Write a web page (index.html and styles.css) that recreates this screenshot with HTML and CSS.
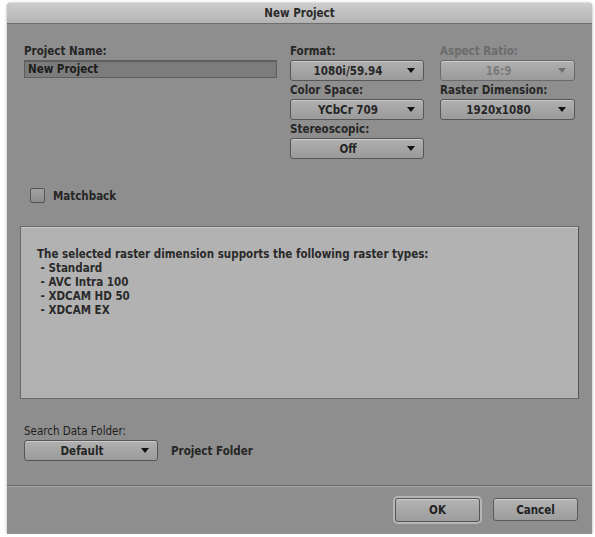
FILE: index.html
```html
<!DOCTYPE html>
<html lang="en">
<head>
    <meta charset="UTF-8">
    <meta name="viewport" content="width=device-width, initial-scale=1.0">
    <title>New Project</title>
    <link rel="stylesheet" href="styles.css">
</head>
<body>
    <div class="window">
        <div class="titlebar">New Project</div>
        <div class="content">
            <div class="top">
                <div class="col col-name">
                    <div class="field">
                        <label for="projectName">Project Name:</label>
                        <input type="text" id="projectName" class="name-input" value="New Project">
                    </div>
                </div>
                <div class="col col-mid">
                    <div class="field">
                        <label>Format:</label>
                        <div class="popup">1080i/59.94<span class="arrow"></span></div>
                    </div>
                    <div class="field">
                        <label>Color Space:</label>
                        <div class="popup">YCbCr 709<span class="arrow"></span></div>
                    </div>
                    <div class="field">
                        <label>Stereoscopic:</label>
                        <div class="popup">Off<span class="arrow"></span></div>
                    </div>
                </div>
                <div class="col col-right">
                    <div class="field disabled">
                        <label>Aspect Ratio:</label>
                        <div class="popup">16:9<span class="arrow"></span></div>
                    </div>
                    <div class="field">
                        <label>Raster Dimension:</label>
                        <div class="popup">1920x1080<span class="arrow"></span></div>
                    </div>
                </div>
            </div>

            <div class="check-row">
                <span class="checkbox"></span>
                <span class="check-label">Matchback</span>
            </div>

            <div class="info">
                <p>The selected raster dimension supports the following raster types:</p>
                <p>&nbsp;- Standard</p>
                <p>&nbsp;- AVC Intra 100</p>
                <p>&nbsp;- XDCAM HD 50</p>
                <p>&nbsp;- XDCAM EX</p>
            </div>

            <div class="search">
                <label>Search Data Folder:</label>
                <div class="search-row">
                    <div class="popup">Default<span class="arrow"></span></div>
                    <span class="folder">Project Folder</span>
                </div>
            </div>
        </div>
        <div class="footer">
            <button class="btn btn-default">OK</button>
            <button class="btn">Cancel</button>
        </div>
    </div>
</body>
</html>
```

FILE: styles.css
```css
body {
    margin: 0;
    padding: 0;
    background: #ffffff;
    font-family: "DejaVu Sans Condensed", "DejaVu Sans", sans-serif;
    font-size: 11.5px;
    color: #1e1e1e;
}
.window {
    margin: 3px 3px 0 7px;
    width: 585px;
    height: 531px;
    background: #8e8e8e;
    border-radius: 4px 4px 0 0;
    box-shadow: 0 0 3px rgba(0, 0, 0, 0.35);
    display: flex;
    flex-direction: column;
}
.titlebar {
    height: 20px;
    line-height: 21px;
    text-align: center;
    font-weight: bold;
    background: linear-gradient(#cdcdcd, #b3b3b3);
    border-bottom: 1px solid #6e6e6e;
    border-radius: 4px 4px 0 0;
    color: #2a2a2a;
}
.content {
    padding: 21px 0 0 13px;
    flex: 1;
}
.top {
    display: flex;
}
.col-name {
    width: 253px;
    margin-left: 4px;
}
.col-mid {
    width: 134px;
    margin-left: 13px;
}
.col-right {
    width: 135px;
    margin-left: 16px;
}
.field {
    margin-bottom: 3px;
}
.field label,
.search label {
    display: block;
    height: 13px;
    line-height: 13px;
    margin-bottom: 2px;
    font-weight: bold;
    color: #262626;
}
.field.disabled label {
    color: #6c6c6c;
}
.name-input {
    box-sizing: border-box;
    width: 253px;
    height: 18px;
    margin: 0;
    padding: 0 3px;
    border: 1px solid #5e5e5e;
    background: #7c7c7c;
    box-shadow: inset 0 1px 1px rgba(0, 0, 0, 0.25);
    font-family: inherit;
    font-size: 11.5px;
    font-weight: bold;
    color: #1c1c1c;
}
.popup {
    position: relative;
    box-sizing: border-box;
    height: 21px;
    line-height: 20px;
    border: 1px solid #565656;
    border-radius: 3px;
    background: linear-gradient(#b0b0b0, #9a9a9a);
    box-shadow: inset 0 1px 0 rgba(255, 255, 255, 0.35);
    text-align: center;
    padding-right: 18px;
    font-weight: bold;
    color: #262626;
}
.arrow {
    position: absolute;
    right: 8px;
    top: 7px;
    width: 0;
    height: 0;
    border-left: 4px solid transparent;
    border-right: 4px solid transparent;
    border-top: 5px solid #111111;
}
.disabled .popup {
    color: #7a7a7a;
    border-color: #6a6a6a;
}
.disabled .arrow {
    border-top-color: #6e6e6e;
}
.check-row {
    display: flex;
    align-items: center;
    margin: 26px 0 0 10px;
}
.checkbox {
    width: 13px;
    height: 13px;
    border: 1px solid #555555;
    border-radius: 2px;
    background: linear-gradient(#a2a2a2, #8c8c8c);
}
.check-label {
    margin-left: 8px;
    font-weight: bold;
    color: #262626;
}
.info {
    box-sizing: border-box;
    width: 559px;
    height: 173px;
    margin: 23px 0 0 0;
    padding: 20px 0 0 16px;
    background: #b2b2b2;
    border: 1px solid #6a6a6a;
    border-right-color: #555555;
    box-shadow: inset 0 1px 0 rgba(255, 255, 255, 0.3);
    font-weight: bold;
    color: #2a2a2a;
}
.info p {
    margin: 0;
    line-height: 14px;
}
.search {
    margin: 26px 0 0 4px;
}
.search label {
    font-weight: normal;
    color: #1e1e1e;
    margin-bottom: 2px;
}
.search-row {
    display: flex;
    align-items: center;
}
.search-row .popup {
    width: 134px;
}
.folder {
    margin-left: 13px;
    font-weight: bold;
    color: #262626;
}
.footer {
    height: 47px;
    border-top: 1px solid #666666;
    box-shadow: inset 0 1px 0 #a8a8a8;
    display: flex;
    justify-content: flex-end;
    align-items: center;
    padding-right: 14px;
    padding-bottom: 1px;
}
.btn {
    height: 23px;
    width: 85px;
    margin-left: 13px;
    border: 1px solid #5a5a5a;
    border-radius: 3px;
    background: linear-gradient(#b4b4b4, #9c9c9c);
    box-shadow: inset 0 1px 0 rgba(255, 255, 255, 0.35);
    font-family: inherit;
    font-size: 11.5px;
    font-weight: bold;
    color: #222222;
}
.btn-default {
    width: 85px;
    height: 24px;
    border: 1px solid #555555;
    box-shadow: 0 0 0 2px #b6b6b6, inset 0 1px 0 rgba(255, 255, 255, 0.35);
}
```
